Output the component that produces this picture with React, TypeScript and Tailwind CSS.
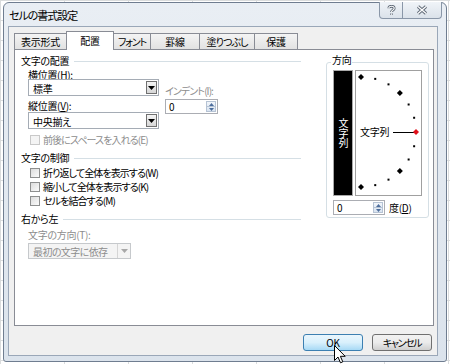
import React from 'react';

const font = "font-['Noto_Sans_CJK_JP','Noto_Sans',sans-serif] [font-feature-settings:'palt']";

function DownArrow({ color = '#000' }: { color?: string }) {
  return (
    <svg width="7" height="4" viewBox="0 0 7 4">
      <path d="M0 0h7L3.5 4z" fill={color} />
    </svg>
  );
}

function Combo({ value, width, disabled }: { value: string; width: string; disabled?: boolean }) {
  return (
    <div
      className={`flex ${width} ${
        disabled ? 'h-[16px] border border-[#c6c9cc] bg-[#f4f4f4] text-[#8d8d8d]' : 'h-[17px] border border-[#a5acb5] bg-white text-black'
      }`}
    >
      <div className={`flex-1 pl-[4px] truncate ${disabled ? 'leading-[15px] tracking-[-0.6px]' : 'leading-[17px]'}`}>{value}</div>
      {disabled ? (
        <div className="flex w-[13px] items-center justify-center border-l border-[#d5d5d5] bg-[#f4f4f4]">
          <DownArrow color="#a8a8a8" />
        </div>
      ) : (
        <div className="m-[1px] flex w-[11px] items-center justify-center border border-[#707070] bg-gradient-to-b from-[#f4f4f4] to-[#d6d6d6]">
          <DownArrow />
        </div>
      )}
    </div>
  );
}

function Spin({ value, width }: { value: string; width: string }) {
  return (
    <div className={`flex h-[15px] ${width} border border-[#abadb3] bg-white`}>
      <div className="flex-1 pl-[3px] leading-[13px]">{value}</div>
      <div className="m-[1px] flex w-[10px] flex-col border border-[#b6c3d4] bg-gradient-to-b from-[#f1f5fa] to-[#d9e4f1]">
        <div className="flex flex-1 items-center justify-center border-b border-[#b6c3d4]">
          <svg width="5" height="3" viewBox="0 0 5 3">
            <path d="M0 3h5L2.5 0z" fill="#4c6d9c" />
          </svg>
        </div>
        <div className="flex flex-1 items-center justify-center">
          <svg width="5" height="3" viewBox="0 0 5 3">
            <path d="M0 0h5L2.5 3z" fill="#4c6d9c" />
          </svg>
        </div>
      </div>
    </div>
  );
}

function Check({ label, disabled }: { label: string; disabled?: boolean }) {
  return (
    <div className={`flex h-[14px] items-center ml-[9px] ${disabled ? 'text-[#8d8d8d]' : 'text-black'}`}>
      <div
        className={`h-[10px] w-[10px] border ${
          disabled ? 'border-[#c9c9c9] bg-[#f4f4f4]' : 'border-[#8e8f8f] bg-gradient-to-br from-[#dcdcdc] to-[#fbfbfb]'
        }`}
      />
      <span className="ml-[3px] leading-[12px] tracking-[-0.9px]">{label}</span>
    </div>
  );
}

function GroupHead({ label, className = '' }: { label: string; className?: string }) {
  return (
    <div className={`flex h-[12px] items-center ${className}`}>
      <span className="leading-[12px]">{label}</span>
      <div className="ml-[5px] h-px flex-1 bg-[#d5dfe5]" />
    </div>
  );
}

const tabs = [
  { label: '表示形式', w: 'w-[53px]', t: '' },
  { label: '配置', w: 'w-[48px]', t: '', active: true },
  { label: 'フォント', w: 'w-[38px]', t: 'tracking-[-1.2px]' },
  { label: '罫線', w: 'w-[50px]', t: '' },
  { label: '塗りつぶし', w: 'w-[56px]', t: 'tracking-[-1px]' },
  { label: '保護', w: 'w-[44px]', t: '' },
];

function Dial() {
  const cx = 5;
  const cy = 61;
  const r = 55;
  const marks = [90, 75, 60, 45, 30, 15, -15, -30, -45, -60, -75, -90];
  return (
    <svg width="65" height="124" viewBox="0 0 65 124">
      {marks.map((a) => {
        const x = cx + r * Math.cos((a * Math.PI) / 180);
        const y = cy - r * Math.sin((a * Math.PI) / 180);
        return a % 45 === 0 ? (
          <path key={a} d={`M${x} ${y - 3}l3 3l-3 3l-3 -3z`} fill="#000" />
        ) : (
          <rect key={a} x={x - 1} y={y - 1} width="2" height="2" fill="#000" />
        );
      })}
      <text x="4" y="65" fontSize="10" fill="#000" fontFamily="'Noto Sans CJK JP', sans-serif">
        文字列
      </text>
      <line x1="37" y1="61.5" x2="58" y2="61.5" stroke="#000" strokeWidth="1" />
      <path d={`M${cx + r} ${cy - 3}l3 3l-3 3l-3 -3z`} fill="#e0101a" />
    </svg>
  );
}

export default function App() {
  return (
    <div
      className={`relative h-[364px] w-[450px] overflow-hidden bg-white bg-[linear-gradient(#dadcdd_1px,transparent_1px),linear-gradient(90deg,#dadcdd_1px,transparent_1px)] bg-[size:64px_20px] pl-[3px] pt-[2px] text-[10px] tracking-[-0.3px] text-black ${font}`}
    >
      {/* window */}
      <div className="flex h-[360px] w-[444px] flex-col rounded-t-[6px] rounded-b-[3px] border border-[#6f7d90] bg-gradient-to-b from-[#e9eef4] to-[#dbe3ec]">
        {/* title bar */}
        <div className="flex h-[23px] items-start">
          <div className="pl-[5px] pt-[5px] text-[11px] leading-[14px] tracking-[-1px] text-black">セルの書式設定</div>
          <div className="-mt-[1px] ml-auto mr-[4px] flex h-[17px] rounded-b-[4px] border border-t-0 border-[#8a97a8] bg-gradient-to-b from-[#f0f4f8] to-[#dbe2ea]">
            <div className="flex w-[23px] items-center justify-center border-r border-[#8a97a8]">
              <svg width="9" height="11" viewBox="0 0 9 11">
                <path d="M1.8 3.2C1.8 0.6 7.2 0.6 7.2 3.2C7.2 5.2 4.5 5 4.5 7M4.5 8.6v1.2" fill="none" stroke="#5d6875" strokeWidth="2.8" />
                <path d="M1.8 3.2C1.8 0.6 7.2 0.6 7.2 3.2C7.2 5.2 4.5 5 4.5 7M4.5 8.6v1.2" fill="none" stroke="#fff" strokeWidth="1.1" />
              </svg>
            </div>
            <div className="flex w-[38px] items-center justify-center">
              <svg width="12" height="10" viewBox="0 0 12 10">
                <path d="M2 1.5l8 7M10 1.5l-8 7" fill="none" stroke="#5d6875" strokeWidth="3.2" />
                <path d="M2 1.5l8 7M10 1.5l-8 7" fill="none" stroke="#fff" strokeWidth="1.3" />
              </svg>
            </div>
          </div>
        </div>

        {/* client area */}
        <div className="ml-[4px] mr-[8px] flex h-[330px] flex-col border border-[#9aa7b8] bg-[#f0f0f0] pl-[5px] pr-[3px] pt-[4px]">
          {/* tabs */}
          <div className="flex h-[18px] items-end">
            {tabs.map((t, i) =>
              t.active ? (
                <div
                  key={t.label}
                  className={`relative z-10 -mb-[1px] ${i > 0 ? '-ml-[1px]' : ''} flex h-[19px] ${t.w} items-center justify-center border border-b-0 border-[#898c95] bg-white leading-[12px]`}
                >
                  {t.label}
                </div>
              ) : (
                <div
                  key={t.label}
                  className={`${i > 0 ? '-ml-[1px]' : ''} flex h-[16px] ${t.w} ${t.t} items-center justify-center border border-b-0 border-[#898c95] bg-gradient-to-b from-[#f4f4f4] to-[#e2e2e2] leading-[12px]`}
                >
                  {t.label}
                </div>
              )
            )}
          </div>

          {/* panel */}
          <div className="flex h-[277px] border border-[#898c95] bg-white">
            {/* left column */}
            <div className="flex w-[286px] flex-col pl-[6px] pt-[5px]">
              <GroupHead label="文字の配置" />
              <div className="ml-[7px] mt-[1px] flex">
                <div className="flex w-[131px] flex-col">
                  <div className="h-[11px] leading-[13px]">
                    横位置(<span className="underline">H</span>):
                  </div>
                  <Combo value="標準" width="w-[131px]" />
                  <div className="mt-[4px] h-[12px] leading-[12px]">
                    縦位置(<span className="underline">V</span>):
                  </div>
                  <Combo value="中央揃え" width="w-[131px]" />
                </div>
                <div className="ml-[6px] flex flex-col pt-[17px]">
                  <div className="h-[12px] leading-[12px] tracking-[-0.9px] text-[#8d8d8d]">インデント(I):</div>
                  <div className="mt-[2px]">
                    <Spin value="0" width="w-[53px]" />
                  </div>
                </div>
              </div>
              <div className="mt-[4px]">
                <Check label="前後にスペースを入れる(E)" disabled />
              </div>
              <GroupHead label="文字の制御" className="mt-[5px]" />
              <div className="mt-[2px] flex flex-col">
                <Check label="折り返して全体を表示する(W)" />
                <Check label="縮小して全体を表示する(K)" />
                <Check label="セルを結合する(M)" />
              </div>
              <GroupHead label="右から左" className="mt-[5px]" />
              <div className="ml-[7px] mt-[4px] h-[12px] leading-[12px] text-[#8d8d8d]">文字の方向(T):</div>
              <div className="ml-[7px] mt-[2px]">
                <Combo value="最初の文字に依存" width="w-[103px]" disabled />
              </div>
            </div>

            {/* direction group */}
            <div className="relative ml-[25px] mt-[12px] h-[156px] w-[103px] rounded-[3px] border border-[#d5dfe5] pl-[6px] pt-[7px]">
              <div className="absolute -top-[9px] left-[4px] bg-white px-[1px] leading-[12px]">方向</div>
              <div className="flex gap-[2px]">
                <div className="flex h-[126px] w-[20px] items-center justify-center border border-[#a9a9a9] bg-black text-[10px] leading-[18px] tracking-normal text-white">
                  <span className="[writing-mode:vertical-rl]">文字列</span>
                </div>
                <div className="h-[126px] w-[67px] border border-[#a0a0a0] bg-white">
                  <Dial />
                </div>
              </div>
              <div className="mt-[4px] flex items-center">
                <Spin value="0" width="w-[52px]" />
                <span className="ml-[4px] h-[12px] leading-[12px]">
                  度(<span className="underline">D</span>)
                </span>
              </div>
            </div>
          </div>

          {/* buttons */}
          <div className="flex justify-end gap-[9px] pr-[2px] pt-[8px]">
            <div className="flex h-[17px] w-[60px] items-center justify-center rounded-[3px] border border-[#3c7fb1] bg-gradient-to-b from-[#eaf6fd] via-[#d9f0fc] to-[#a7d9f5] leading-[12px]">
              OK
            </div>
            <div className="flex h-[17px] w-[60px] items-center justify-center rounded-[3px] border border-[#707070] bg-gradient-to-b from-[#f2f2f2] via-[#ebebeb] to-[#cfcfcf] leading-[12px] tracking-[-1.4px]">
              キャンセル
            </div>
          </div>
        </div>
      </div>

      {/* mouse pointer */}
      <svg className="absolute left-[334px] top-[345px]" width="12" height="19" viewBox="0 0 12 19">
        <path d="M0.5 0.5V15.5L4 12L6.5 17.8L8.8 16.8L6.4 11.3H11.2Z" fill="#fff" stroke="#000" strokeWidth="1" strokeLinejoin="round" />
      </svg>
    </div>
  );
}
